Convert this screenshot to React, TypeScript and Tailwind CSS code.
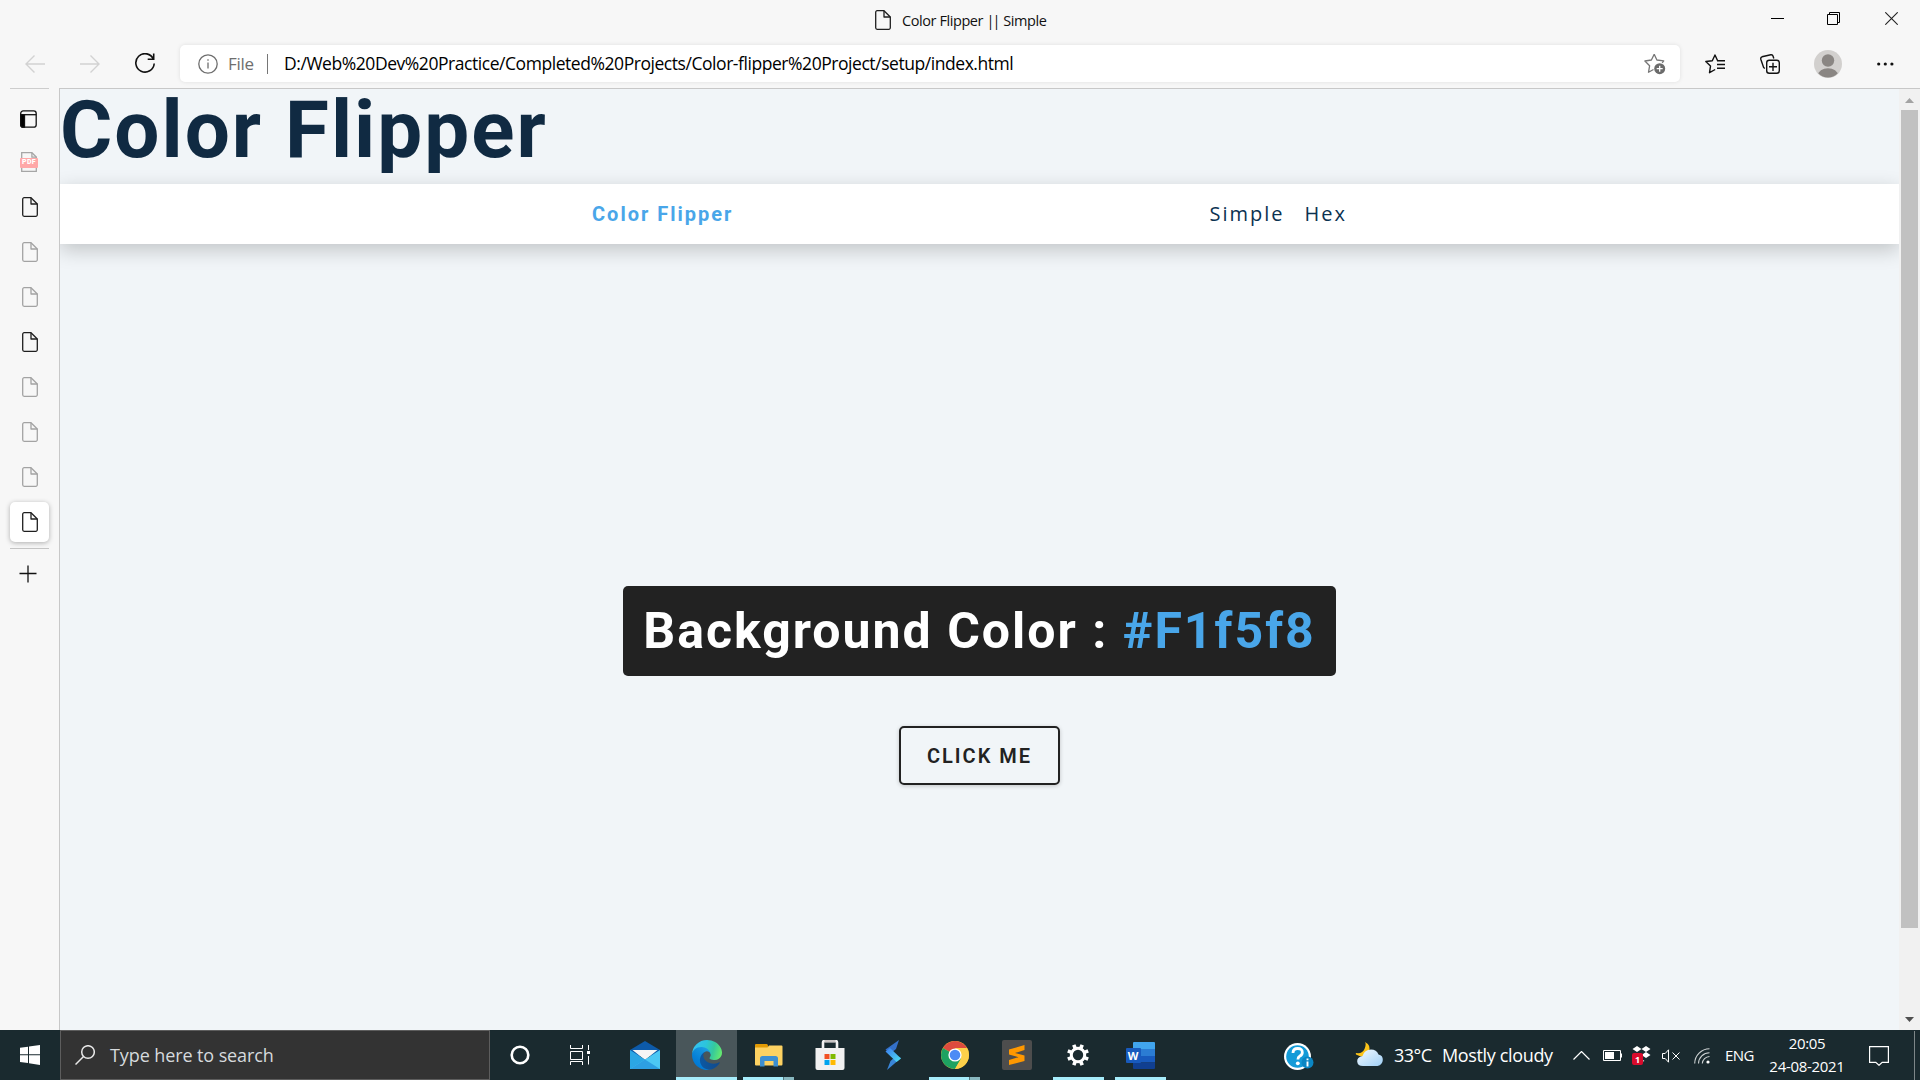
import React from "react";

const UI = "font-['Open_Sans',sans-serif]";

function FileIcon({ color = "#1f1f1f" }: { color?: string }) {
  return (
    <svg width="16" height="20" viewBox="0 0 16 20" fill="none" stroke={color} strokeWidth="1.3" strokeLinejoin="round">
      <path d="M9 .7H2.2A1.5 1.5 0 0 0 .7 2.2v15.6a1.5 1.5 0 0 0 1.5 1.5h11.6a1.5 1.5 0 0 0 1.5-1.5V7z" />
      <path d="M9 .7V7h6.3" />
    </svg>
  );
}

function PdfIcon() {
  return (
    <div className="relative h-5 w-[18px]">
      <svg width="18" height="20" viewBox="0 0 18 20" fill="none" stroke="#a6a6a6" strokeWidth="1.3">
        <path d="M1.7 6V.7h10.2l4.4 4.4V6M1.7 16v3.3h14.6V16" />
        <path d="M11.9.7v4.4h4.4" />
      </svg>
      <div className="absolute top-[6px] left-0 flex h-[10px] w-[18px] items-center justify-center rounded-[1px] bg-[#ffa8a8] font-['Roboto',sans-serif] text-[7px] leading-none font-black tracking-[0.4px] text-white">
        PDF
      </div>
    </div>
  );
}

function TitleBar() {
  return (
    <div className="flex h-[45px] shrink-0 items-start">
      <div className="flex h-[40px] flex-1 items-center pl-[875px]">
        <FileIcon />
        <span className="ml-[11px] pt-px text-[14.5px] leading-5 tracking-[-0.42px] whitespace-nowrap text-[#111]">
          Color Flipper <span className="tracking-[-2px]">||</span><span className="ml-[1.5px]"> Simple</span>
        </span>
      </div>
      <div className="flex h-[37px] items-center pr-[22px]">
        <div className="h-px w-[13px] bg-black" />
        <svg className="ml-[43px]" width="13" height="13" viewBox="0 0 13 13" fill="none" stroke="#000">
          <path d="M.5 2.5h10v10H.5zM2.5 2.5v-2h10v10h-2" />
        </svg>
        <svg className="ml-[45px]" width="13" height="13" viewBox="0 0 13 13" fill="none" stroke="#222" strokeWidth="1.1">
          <path d="M.3.3l12.4 12.4M12.7.3L.3 12.7" />
        </svg>
      </div>
    </div>
  );
}

function Toolbar() {
  return (
    <div className="flex h-[43px] shrink-0 items-start">
      <div className="flex h-[37px] w-[180px] items-center pl-[25px]">
        <svg width="20" height="18" viewBox="0 0 20 18" fill="none" stroke="#d2d2d2" strokeWidth="1.4">
          <path d="M20 9H1M9.500.5L1 9l8.500 8.500" />
        </svg>
        <svg className="ml-[35px]" width="20" height="18" viewBox="0 0 20 18" fill="none" stroke="#d2d2d2" strokeWidth="1.4">
          <path d="M0 9h19M10.500.5L19 9l-8.500 8.500" />
        </svg>
        <svg className="ml-[35px]" width="20" height="21" viewBox="0 0 20 21" fill="none" stroke="#111" strokeWidth="1.6">
          <path d="M18.500 6.300A9.200 9.200 0 1 0 19.200 10.500M18.700.5v5.800h-6" />
        </svg>
      </div>
      <div className="flex h-[37px] w-[1500px] items-center rounded-[5px] bg-white pr-[14px] pl-[18px] shadow-[0_0_4px_rgba(0,0,0,0.1)]">
        <svg width="20" height="20" viewBox="0 0 20 20" fill="none" stroke="#6e6e6e" strokeWidth="1.300">
          <circle cx="10" cy="10" r="9.200" />
          <path d="M10 8.500v6M10 5.300v1.500" />
        </svg>
        <span className="ml-[10px] w-[39px] text-[17px] tracking-[-0.3px] text-[#6e6e6e]">File</span>
        <div className="h-[20px] w-px bg-[#767676]" />
        <span className="ml-[16px] text-[17.5px] tracking-[-0.445px] whitespace-nowrap text-black">
          D:/Web%20Dev%20Practice/Completed%20Projects/Color-flipper%20Project/setup/index.html
        </span>
        <svg className="ml-auto" width="22" height="22" viewBox="0 0 22 22" fill="none" stroke="#767676" strokeWidth="1.300">
          <path d="M10.200 1.200l2.700 5.800 6.800.9-1.500 2M9.500 16.500l-5 2.800 1.100-6.500L.9 8l6.500-1 2.800-5.800" strokeLinejoin="round" />
          <circle cx="15.700" cy="15.700" r="5.500" fill="#6b6b6b" stroke="none" />
          <path d="M15.700 12.700v6M12.700 15.700h6" stroke="#fff" />
        </svg>
      </div>
      <div className="flex h-[38px] flex-1 items-center pl-[25px]">
        <svg width="20" height="20" viewBox="0 0 20 20" fill="none" stroke="#111" strokeWidth="1.400">
          <path d="M12.500 6.500L10 1 7.300 6.700.8 7.500l4.700 4.600-1 6.600 5.700-3.200" strokeLinejoin="round" />
          <path d="M12 6.800h8M12 10.500h8M12 14.200h8" />
        </svg>
        <svg className="ml-[35px]" width="20" height="20" viewBox="0 0 20 20" fill="none" stroke="#111" strokeWidth="1.400">
          <path d="M4.800 14.500L3.600 13.400.8 5.200Q.4 3.300 2 2.800L10.800.8q1.800-.3 2.300 1.400l.7 2.300" />
          <rect x="6.700" y="6.300" width="12.600" height="12.900" rx="2.500" />
          <path d="M13 8.700v8.200M9 12.800h8" />
        </svg>
        <svg className="ml-[34px]" width="28" height="28" viewBox="0 0 28 28">
          <defs><clipPath id="av"><circle cx="14" cy="14" r="13.600" /></clipPath></defs>
          <circle cx="14" cy="14" r="14" fill="#d2d0ce" />
          <circle cx="14" cy="10.500" r="6.200" fill="#8a8683" />
          <ellipse cx="14" cy="25.500" rx="10" ry="7.300" fill="#8a8683" clipPath="url(#av)" />
        </svg>
        <svg className="ml-[35px]" width="17" height="4" viewBox="0 0 17 4" fill="#111">
          <circle cx="1.700" cy="2" r="1.600" /><circle cx="8.300" cy="2" r="1.600" /><circle cx="14.900" cy="2" r="1.600" />
        </svg>
      </div>
    </div>
  );
}

function SideTabs() {
  const tabs = ["#1f1f1f", "#a3a3a3", "#a3a3a3", "#1f1f1f", "#a3a3a3", "#a3a3a3", "#a3a3a3"];
  return (
    <div className="flex w-[59px] shrink-0 flex-col pl-[10px]">
      <div className="h-px w-[39px] bg-[#cdcdcd]" />
      <div className="flex h-[50px] items-center pt-[10px] pl-[10px]">
        <svg width="17" height="18" viewBox="0 0 17 18" fill="none" stroke="#111" strokeWidth="1.300">
          <rect x=".7" y=".9" width="15.500" height="16.300" rx="2.500" />
          <path d="M.7 4.700h15.500" />
          <path d="M.7 4.700H4.500v12.500H3q-2.300 0-2.300-2.500z" fill="#000" />
        </svg>
      </div>
      <div className="flex h-[45px] items-center pl-[10px]"><PdfIcon /></div>
      {tabs.map((c, i) => (
        <div key={i} className="flex h-[45px] items-center pl-[12px]"><FileIcon color={c} /></div>
      ))}
      <div className="mt-[3px] flex h-[40px] w-[39px] shrink-0 items-center rounded-[5px] bg-white pl-[12px] shadow-[0_1px_5px_rgba(0,0,0,0.3)]">
        <FileIcon />
      </div>
      <div className="mt-[6px] h-px w-[39px] shrink-0 bg-[#c4c4c4]" />
      <svg className="mt-[16px] ml-[9px]" width="18" height="18" viewBox="0 0 18 18" stroke="#111" strokeWidth="1.300">
        <path d="M9 .5v17M.5 8.500h17" />
      </svg>
    </div>
  );
}

function Page() {
  return (
    <div className="flex min-w-0 flex-1 flex-col overflow-x-clip bg-[#f1f5f8] font-['Roboto',sans-serif]">
      <h1 className="mb-[15px] h-[80px] pt-px text-[80px] leading-none font-bold tracking-[2px] text-[#102a42]">Color Flipper</h1>
      <nav className="h-[60px] shrink-0 bg-white shadow-[0_6px_19px_rgba(0,0,0,0.2)]">
        <div className="mx-auto flex h-full w-[775px] items-center justify-between">
          <h4 className="text-[20px] font-bold tracking-[2px] text-[#49a6e9]">Color Flipper</h4>
          <div className="flex font-['Open_Sans',sans-serif] text-[20px] font-medium tracking-[2px] text-[#0b3251]">
            <a className="mr-[20px]">Simple</a>
            <a className="mr-[20px]">Hex</a>
          </div>
        </div>
      </nav>
      <main className="flex flex-col items-center pt-[342px]">
        <h2 className="flex h-[90px] items-center rounded-[5px] bg-[#222] px-[20px] text-[50px] font-bold tracking-[2px] whitespace-pre text-white">
          <span>Background Color : <span className="text-[#49a6e9]">#F1f5f8</span></span>
        </h2>
        <button className="mt-[50px] h-[59px] w-[161px] rounded-[5px] border-2 border-[#222] text-[20px] font-semibold tracking-[2px] text-[#222] shadow-[0_1px_4px_rgba(0,0,0,0.2)]">
          CLICK ME
        </button>
      </main>
    </div>
  );
}

function Scrollbar() {
  return (
    <div className="flex w-[21px] shrink-0 flex-col items-center bg-[#f1f1f1]">
      <svg className="mt-[9px] mb-[7px] shrink-0" width="9" height="5" viewBox="0 0 9 5"><path d="M4.500 0L9 5H0z" fill="#a3a3a3" /></svg>
      <div className="h-[818px] w-[17px] bg-[#c1c1c1]" />
      <svg className="mt-auto mb-[8px]" width="9" height="5" viewBox="0 0 9 5"><path d="M4.500 5L9 0H0z" fill="#505050" /></svg>
    </div>
  );
}

function EdgeIcon() {
  return (
    <svg width="30" height="30" viewBox="0 0 256 256">
      <defs>
        <linearGradient id="ea" x1="63" y1="177" x2="241" y2="177" gradientUnits="userSpaceOnUse"><stop stopColor="#0c59a4" /><stop offset="1" stopColor="#114a8b" /></linearGradient>
        <linearGradient id="eb" x1="153" y1="100" x2="46" y2="235" gradientUnits="userSpaceOnUse"><stop stopColor="#1b9de2" /><stop offset=".16" stopColor="#1595df" /><stop offset=".67" stopColor="#0680d7" /><stop offset="1" stopColor="#0078d4" /></linearGradient>
        <linearGradient id="ec" x1="10" y1="60" x2="255" y2="130" gradientUnits="userSpaceOnUse"><stop stopColor="#35c1f1" /><stop offset=".4" stopColor="#2cc5dc" /><stop offset=".7" stopColor="#36c99c" /><stop offset="1" stopColor="#66eb6e" /></linearGradient>
      </defs>
      <g transform="translate(-4.630 -4.920)">
        <path fill="url(#ea)" d="M235.680 195.460a93.730 93.730 0 0 1-10.540 4.710 101.870 101.870 0 0 1-35.900 6.460c-47.320 0-88.540-32.550-88.540-74.320A31.480 31.480 0 0 1 117.130 105c-42.800 1.800-53.800 46.400-53.800 72.530 0 73.880 68.090 81.370 82.760 81.370 7.910 0 19.840-2.300 27-4.560l1.310-.44a128.340 128.340 0 0 0 66.600-52.800 4 4 0 0 0-5.320-5.640z" />
        <path fill="url(#eb)" d="M110.340 246.340A79.200 79.200 0 0 1 87.600 225 80.720 80.720 0 0 1 117.130 105c3.120-1.470 8.450-4.130 15.540-4a32.350 32.350 0 0 1 25.690 13 31.880 31.880 0 0 1 6.360 18.660c0-.21 24.460-79.600-80-79.600-43.900 0-80 41.660-80 78.210a130.150 130.150 0 0 0 12.110 56 128 128 0 0 0 156.380 67.110 75.550 75.550 0 0 1-62.780-8z" />
        <path fill="url(#ec)" d="M156.940 153.780c-.81 1.050-3.300 2.500-3.300 5.660 0 2.610 1.700 5.120 4.720 7.230 14.380 10 41.490 8.680 41.560 8.680a59.560 59.560 0 0 0 30.270-8.350A61.380 61.380 0 0 0 260.630 114c.26-22.410-8-37.310-11.340-43.910C228.110 28.670 182.350 5 132.630 5a128 128 0 0 0-128 126.200c.48-36.540 36.800-66.050 80-66.050 3.500 0 23.460.34 42 10.070 16.340 8.580 24.900 18.940 30.850 29.210 6.180 10.670 7.280 24.150 7.280 29.520s-2.740 13.330-7.820 19.830z" />
      </g>
    </svg>
  );
}

function MailIcon() {
  return (
    <svg width="30" height="30" viewBox="0 0 30 30">
      <path d="M0 10L15 1l15 9v6H0z" fill="#0d5aa9" />
      <path d="M2.500 10h25L15 20z" fill="#f5f5f5" />
      <path d="M0 10l15 9.500L30 29H0z" fill="#2ba6e4" />
      <path d="M0 29L30 10v19z" fill="#4cc8f4" />
      <path d="M0 29l15-9.500L30 29z" fill="#2d9fe2" />
    </svg>
  );
}

function FolderIcon() {
  return (
    <svg className="-mt-px" width="28" height="24" viewBox="0 0 28 24">
      <path d="M0 2Q0 1 1 1h10.500q1 0 1.300 1l.7 3H0z" fill="#e19a04" />
      <path d="M0 4.500h12.500L14 2.500h12.500q1 0 1 1V21q0 1.500-1 1.500H1q-1 0-1-1z" fill="#fdd262" />
      <path d="M5 23.500V15.500Q5 13 7.500 13h13Q23 13 23 15.500v8h-4.500V18h-9v5.500z" fill="#3d8fd1" />
    </svg>
  );
}

function StoreIcon() {
  return (
    <svg className="-ml-px" width="30" height="30" viewBox="0 0 30 30">
      <path d="M8 9V2.500Q8 1 9.500 1h11Q22 1 22 2.500V9" fill="none" stroke="#f3f3f3" strokeWidth="2.600" />
      <path d="M9.500 0h11v2.500h-11z" fill="#c9c5c5" />
      <path d="M.5 8h29v20q0 2-2 2h-25q-2 0-2-2z" fill="#f1f1f1" />
      <path d="M9.500 14h5v5h-5z" fill="#f25022" /><path d="M15.500 14h5v5h-5z" fill="#7fba00" />
      <path d="M9.500 20h5v5h-5z" fill="#00a4ef" /><path d="M15.500 20h5v5h-5z" fill="#ffb900" />
    </svg>
  );
}

function BoltIcon() {
  return (
    <svg width="16" height="30" viewBox="0 0 16 30">
      <defs><linearGradient id="bo" x1="0" y1="0" x2="1" y2="1"><stop stopColor="#3b7cf0" /><stop offset="1" stopColor="#4fe3f2" /></linearGradient></defs>
      <path d="M14 0L.5 9.500 5 14l6-5z" fill="#3470c8" />
      <path d="M16 18L2 30l3.500-9L11 16z" fill="#3a86d8" />
      <path d="M5 8l11 10.500-4.500 3.500L.5 11.500z" fill="url(#bo)" />
    </svg>
  );
}

function ChromeIcon() {
  return (
    <svg width="28" height="28" viewBox="0 0 28 28">
      <circle cx="14" cy="14" r="14" fill="#fcc934" />
      <path d="M14 14L1.900 7A14 14 0 0 1 26.100 7z" fill="#dd4b3e" />
      <path d="M14 7h12.100L14 14z" fill="#dd4b3e" />
      <path d="M1.900 7A14 14 0 0 0 14 28l6.100-10.500L14 14z" fill="#1da261" />
      <path d="M14 28A14 14 0 0 0 26.100 7H14l6.100 10.500z" fill="#fdd04a" />
      <circle cx="14" cy="14" r="6.600" fill="#fff" />
      <circle cx="14" cy="14" r="5.300" fill="#4c8bf5" />
    </svg>
  );
}

function SublimeIcon() {
  return (
    <svg width="30" height="30" viewBox="0 0 30 30">
      <rect width="30" height="30" rx="2" fill="#4d4d4d" />
      <path d="M7 9.500L22.500 5v5L13 13l9.500 2.500V21L7 25v-5l9.500-2.800L7 14.500z" fill="#ff9800" />
    </svg>
  );
}

function GearIcon() {
  return (
    <svg className="-mt-px -ml-px" width="22" height="22" viewBox="0 0 22 22">
      <circle cx="11" cy="11" r="6.700" fill="none" stroke="#fff" strokeWidth="3" />
      {[22.5, 67.5, 112.5, 157.5, 202.5, 247.5, 292.5, 337.5].map((a) => (
        <path key={a} d="M9.200 0h3.600v4H9.200z" fill="#fff" transform={`rotate(${a} 11 11)`} />
      ))}
    </svg>
  );
}

function WordIcon() {
  return (
    <div className="relative -ml-px h-[27px] w-[29px]">
      <svg width="29" height="27" viewBox="0 0 29 27">
        <path d="M7 1q0-1 1-1h20q1 0 1 1v6H7z" fill="#41a5ee" /><path d="M7 7h22v7H7z" fill="#2b7cd3" />
        <path d="M7 14h22v6.500H7z" fill="#185abd" /><path d="M7 20.500h22V26q0 1-1 1H8q-1 0-1-1z" fill="#103f91" />
      </svg>
      <div className="absolute top-[6px] left-0 flex h-[15px] w-[15px] items-center justify-center rounded-[1px] bg-[#185abd] text-[11px] leading-none font-bold text-white">W</div>
    </div>
  );
}

function TaskButton({ children, active, bar }: { children: React.ReactNode; active?: boolean; bar?: "full" | "split" }) {
  return (
    <div className={active ? "mr-px flex h-full w-[61px] flex-col items-center bg-[#49565a]" : "flex h-full w-[62px] flex-col items-center pr-px"}>
      <div className="flex h-[47px] shrink-0 items-center pt-[3px]">{children}</div>
      {active && <div className="h-[3px] w-full bg-[#a6ecfb]" />}
      {bar === "full" && <div className="h-[3px] w-[51px] bg-[#a6ecfb]" />}
      {bar === "split" && <div className="flex h-[3px] w-[51px]"><div className="w-[40px] bg-[#a6ecfb]" /><div className="flex-1 border-l border-[#55777d] bg-[#88b8c0]" /></div>}
    </div>
  );
}

function Taskbar() {
  return (
    <div className="flex h-[50px] shrink-0 items-center bg-[#1a2a2f] text-white">
      <div className="flex w-[60px] justify-center">
        <svg width="20" height="20" viewBox="0 0 20 20" fill="#fff"><path d="M0 2.800L8 1.700v7.600H0zM9 1.500L20 0v9.300H9zM0 10.300h8v7.800l-8-1.100zM9 10.300h11V20L9 18.300z" /></svg>
      </div>
      <div className="flex h-[50px] w-[430px] items-center border border-[#5d5d5d] bg-[#333] pl-[14px]">
        <svg width="20" height="20" viewBox="0 0 20 20" fill="none" stroke="#e8e8e8" strokeWidth="1.500"><circle cx="13" cy="7" r="6.300" /><path d="M8.500 11.500L.5 19.500" /></svg>
        <span className="ml-[15px] text-[18px] tracking-[-0.100px] text-[#d6dadd]">Type here to search</span>
      </div>
      <div className="flex w-[60px] justify-center">
        <svg width="20" height="20" viewBox="0 0 20 20"><circle cx="10" cy="10" r="8.300" fill="none" stroke="#fff" strokeWidth="2.600" /></svg>
      </div>
      <div className="flex w-[64px] pl-[20px]">
        <svg width="20" height="20" viewBox="0 0 20 20" fill="none" stroke="#fff"><path d="M.5 0v3.500h12V0M.5 20v-3.500h12V20M.5 6.500h12v8H.5zM18.500 0v5M18.500 11v8.500" /><path d="M17 6h3v3h-3z" fill="#fff" stroke="none" /></svg>
      </div>
      <TaskButton><MailIcon /></TaskButton>
      <TaskButton active><EdgeIcon /></TaskButton>
      <TaskButton bar="split"><FolderIcon /></TaskButton>
      <TaskButton><StoreIcon /></TaskButton>
      <TaskButton><BoltIcon /></TaskButton>
      <TaskButton bar="split"><ChromeIcon /></TaskButton>
      <TaskButton><SublimeIcon /></TaskButton>
      <TaskButton bar="full"><GearIcon /></TaskButton>
      <TaskButton bar="full"><WordIcon /></TaskButton>
      <div className="ml-auto flex h-[50px] w-[636px] items-center pt-px">
        <svg className="mt-[3px]" width="30" height="28" viewBox="0 0 30 28">
          <circle cx="13.500" cy="13.500" r="13.500" fill="#fff" /><circle cx="13.500" cy="13.500" r="11.300" fill="#149bd8" />
          <path d="M9 10q0-4.500 4.700-4.500T18.300 9.500q0 2.300-2.400 3.600-2 1.100-2 3.400" fill="none" stroke="#fff" strokeWidth="2.800" />
          <circle cx="13.800" cy="20.300" r="1.900" fill="#fff" /><circle cx="23.500" cy="19.500" r="6" fill="#0b86c4" />
          <path d="M23.500 18.500v5M23.500 15.500v1.800" stroke="#fff" strokeWidth="1.900" />
        </svg>
        <svg className="-mt-[2px] ml-[41px]" width="28" height="25" viewBox="0 0 28 25">
          <defs><linearGradient id="cl" x1="0" y1="0" x2="1" y2="1"><stop stopColor="#f4faff" /><stop offset="1" stopColor="#9fd0f7" /></linearGradient></defs>
          <path d="M10 0q7 3.500 3.500 10.500T1 12.500Q.5 11.500 1 11q6.500 1 8.500-4T10 0z" fill="#fcc419" />
          <path d="M8 24q-5.500 0-5.800-4.500T7.500 14q2-6.500 8.500-6.500 5.500 0 7.500 5 4.500.8 4.300 5.500T22.500 24z" fill="url(#cl)" />
        </svg>
        <span className="ml-[11px] w-[48px] text-[18px] tracking-[-0.500px]">33°C</span>
        <span className="w-[131px] text-[18px] tracking-[-0.350px] whitespace-nowrap">Mostly cloudy</span>
        <svg width="17" height="9" viewBox="0 0 17 9" fill="none" stroke="#fff" strokeWidth="1.200"><path d="M.5 8.500l8-8 8 8" /></svg>
        <svg className="ml-[13px]" width="19" height="11" viewBox="0 0 19 11" fill="none" stroke="#fff"><path d="M.5.5h17v10H.5z" /><path d="M2 2h9v7H2zM18 3.500h1v4h-1z" fill="#fff" stroke="none" /></svg>
        <div className="relative ml-[10px] h-[19px] w-[19px]">
          <svg width="19" height="16" viewBox="0 0 19 16" fill="#fff"><path d="M5 0l4.500 3L5 6 .5 3zM14 0l4.500 3L14 6 9.500 3zM14 6l4.500 3-4.500 3-4.500-3zM9.500 13l3 2-3 1z" /></svg>
          <div className="absolute top-[7px] left-0 flex h-[12px] w-[11px] items-center justify-center rounded-[2px] bg-[#d90b2c] text-[9px] leading-none font-bold">1</div>
        </div>
        <svg className="ml-[11px]" width="18" height="14" viewBox="0 0 18 14" fill="none" stroke="#fff"><path d="M.5 4.500h2.700l3.300-3.700v12.400L3.200 9.500H.5zM10.500 3.500l7 7M17.500 3.500l-7 7" /></svg>
        <svg className="ml-[14px]" width="16" height="16" viewBox="0 0 16 16" fill="none" stroke="#fff" strokeWidth="1.100"><path d="M.7 15.500A15 15 0 0 1 15.500.7M4.500 15.500A11 11 0 0 1 15.500 4.700M8.300 15.500a7.500 7.500 0 0 1 7.200-7" stroke="#cfd4d5" /><circle cx="14" cy="14" r="1.600" fill="#fff" stroke="none" /></svg>
        <span className="ml-[15px] w-[44px] text-[15px] tracking-[-0.600px]">ENG</span>
        <div className="flex w-[76px] flex-col items-center pb-[2px] text-[15px] leading-[23px] tracking-[-0.300px] whitespace-nowrap">
          <span>20:05</span><span>24-08-2021</span>
        </div>
        <svg className="ml-[24px]" width="20" height="20" viewBox="0 0 20 20" fill="none" stroke="#fff" strokeWidth="1.200"><path d="M.6.6h18.800v15.800h-6.200L10 19.300l-3.200-2.900H.6z" /></svg>
        <div className="ml-[25px] h-[50px] w-px bg-[#7d8688]" />
      </div>
    </div>
  );
}

export default function App() {
  return (
    <div className={`${UI} flex h-[1080px] w-[1920px] flex-col overflow-hidden bg-[#f7f7f7]`}>
      <TitleBar />
      <Toolbar />
      <div className="flex min-h-0 flex-1">
        <SideTabs />
        <div className="flex min-w-0 flex-1 border-t border-l border-[#c8c8c8]">
          <Page />
          <Scrollbar />
        </div>
      </div>
      <Taskbar />
    </div>
  );
}
